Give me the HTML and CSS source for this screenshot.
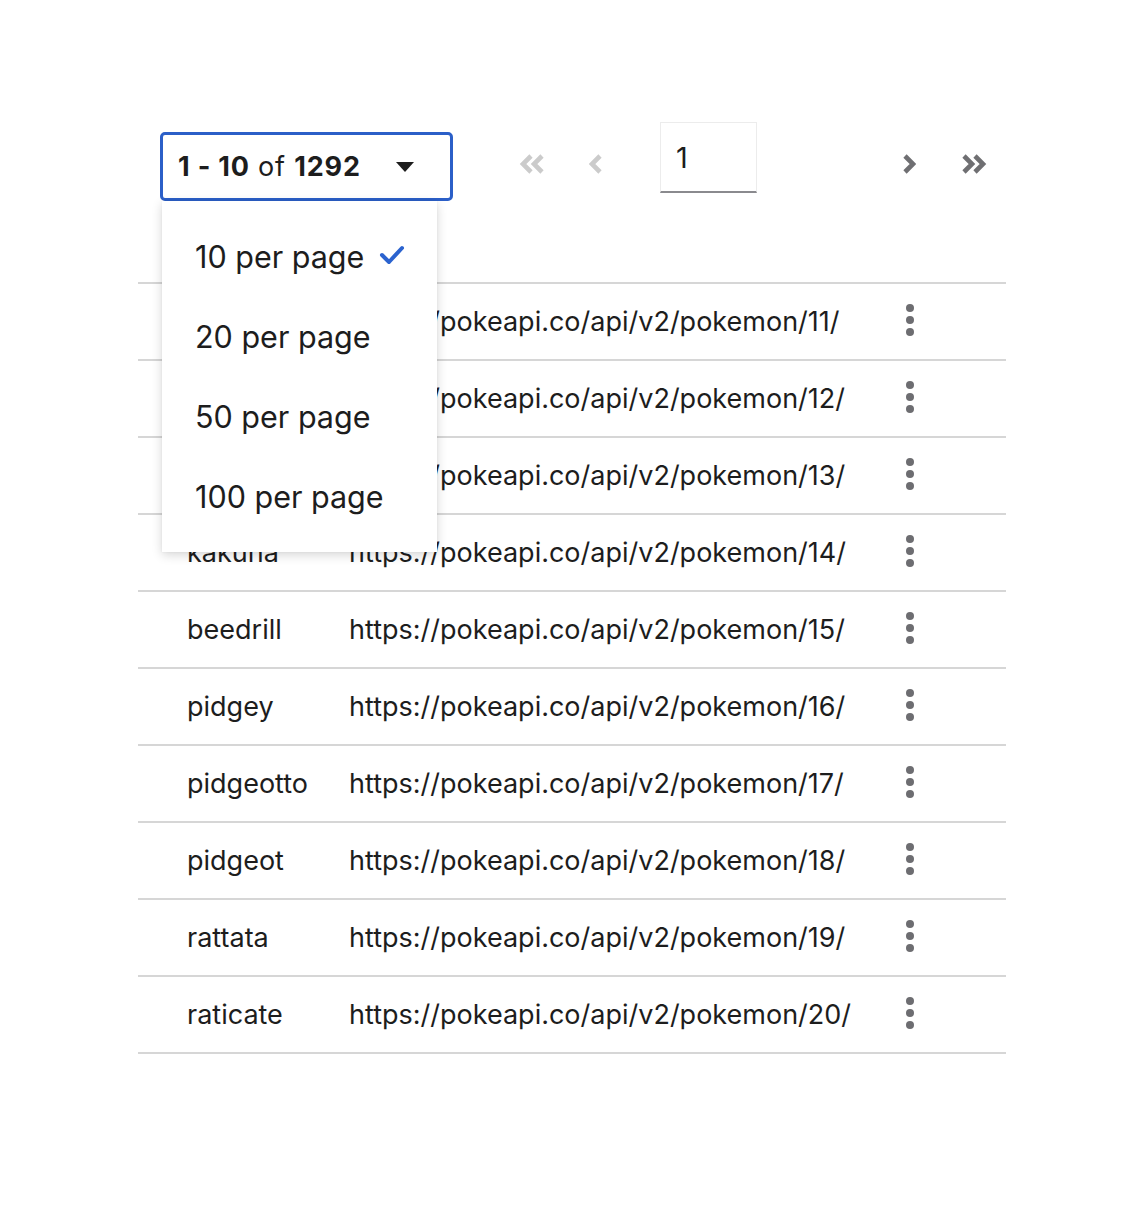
FILE: index.html
```html
<!DOCTYPE html>
<html>
<head>
<meta charset="utf-8">
<link rel="stylesheet" href="styles.css">
</head>
<body>
<div class="wrap">
  <div class="pager">
    <div class="select-wrap">
      <div class="select">
        <span class="range"><b>1 - 10</b> of <b>1292</b></span>
        <svg class="caret" width="18" height="10" viewBox="0 0 18 10"><path d="M0 0 L18 0 L9 10 Z" fill="#1d1d1d"/></svg>
      </div>
      <div class="menu">
        <div class="item">10 per page
          <svg class="check" width="26" height="22" viewBox="0 0 26 22"><path d="M3 11 L10 18 L23 4" fill="none" stroke="#2b63cf" stroke-width="4" stroke-linecap="round" stroke-linejoin="round"/></svg>
        </div>
        <div class="item">20 per page</div>
        <div class="item">50 per page</div>
        <div class="item">100 per page</div>
      </div>
    </div>
    <div class="nav">
      <span class="btn first disabled"><svg width="26" height="22" viewBox="0 0 26 22"><path d="M12 3 L4 11 L12 19 M23 3 L15 11 L23 19" fill="none" stroke="currentColor" stroke-width="4.6"/></svg></span>
      <span class="btn prev disabled"><svg width="14" height="22" viewBox="0 0 14 22"><path d="M11 3 L3 11 L11 19" fill="none" stroke="currentColor" stroke-width="4.6"/></svg></span>
      <div class="page-input">1</div>
      <span class="spacer"></span>
      <span class="btn next"><svg width="14" height="22" viewBox="0 0 14 22"><path d="M3 3 L11 11 L3 19" fill="none" stroke="currentColor" stroke-width="4.6"/></svg></span>
      <span class="btn last"><svg width="26" height="22" viewBox="0 0 26 22"><path d="M3 3 L11 11 L3 19 M14 3 L22 11 L14 19" fill="none" stroke="currentColor" stroke-width="4.6"/></svg></span>
    </div>
  </div>
  <div class="table">
    <div class="head"></div>
    <div class="row"><span class="name">metapod</span><span class="url">https://pokeapi.co/api/v2/pokemon/11/</span><span class="kebab"><i></i><i></i><i></i></span></div>
    <div class="row"><span class="name">butterfree</span><span class="url">https://pokeapi.co/api/v2/pokemon/12/</span><span class="kebab"><i></i><i></i><i></i></span></div>
    <div class="row"><span class="name">weedle</span><span class="url">https://pokeapi.co/api/v2/pokemon/13/</span><span class="kebab"><i></i><i></i><i></i></span></div>
    <div class="row"><span class="name">kakuna</span><span class="url">https://pokeapi.co/api/v2/pokemon/14/</span><span class="kebab"><i></i><i></i><i></i></span></div>
    <div class="row"><span class="name">beedrill</span><span class="url">https://pokeapi.co/api/v2/pokemon/15/</span><span class="kebab"><i></i><i></i><i></i></span></div>
    <div class="row"><span class="name">pidgey</span><span class="url">https://pokeapi.co/api/v2/pokemon/16/</span><span class="kebab"><i></i><i></i><i></i></span></div>
    <div class="row"><span class="name">pidgeotto</span><span class="url">https://pokeapi.co/api/v2/pokemon/17/</span><span class="kebab"><i></i><i></i><i></i></span></div>
    <div class="row"><span class="name">pidgeot</span><span class="url">https://pokeapi.co/api/v2/pokemon/18/</span><span class="kebab"><i></i><i></i><i></i></span></div>
    <div class="row"><span class="name">rattata</span><span class="url">https://pokeapi.co/api/v2/pokemon/19/</span><span class="kebab"><i></i><i></i><i></i></span></div>
    <div class="row"><span class="name">raticate</span><span class="url">https://pokeapi.co/api/v2/pokemon/20/</span><span class="kebab"><i></i><i></i><i></i></span></div>
  </div>
</div>
</body>
</html>
```

FILE: styles.css
```css
* { box-sizing: border-box; }
html, body { margin: 0; padding: 0; background: #fff; }
body { font-family: Inter, "Noto Sans", sans-serif; color: #1d1d1d; }

.wrap {
  margin-left: 138px;
  width: 868px;
  padding-top: 122px;
}

.pager {
  display: flex;
  align-items: flex-start;
  height: 84px;
}

.select-wrap {
  position: relative;
  margin-left: 22px;
  margin-top: 10px;
}

.select {
  width: 293px;
  height: 69px;
  border: 3px solid #2b5fc8;
  border-radius: 5px;
  display: flex;
  align-items: center;
  padding-left: 15px;
  font-size: 27px;
  letter-spacing: 0.8px;
}
.select b { font-weight: 700; }
.range { flex: 0 0 auto; }
.caret { margin-left: 35px; }

.menu {
  position: absolute;
  left: 2px;
  top: 69px;
  width: 275px;
  background: #fff;
  padding: 15px 0 16px;
  box-shadow: 0 3px 10px rgba(0,0,0,0.16), 0 0 2px rgba(0,0,0,0.06);
  z-index: 5;
}
.item {
  height: 80px;
  display: flex;
  align-items: center;
  padding-left: 33px;
  font-size: 30.5px;
}
.check { margin-left: 15px; margin-top: -2px; }

.nav {
  display: flex;
  align-items: flex-start;
  flex: 1;
  padding-left: 66px;
}
.btn {
  display: flex;
  align-items: center;
  justify-content: center;
  height: 22px;
  margin-top: 31px;
  color: #6f6f72;
}
.btn.disabled { color: #cbcbcb; }
.first { width: 26px; }
.prev { width: 14px; margin-left: 44px; }
.page-input {
  margin-left: 57px;
  width: 97px;
  height: 71px;
  border: 1px solid #ececec;
  border-bottom: 2px solid #8a8a8e;
  font-size: 29px;
  padding-left: 15px;
  padding-top: 20px;
  line-height: 1;
}
.spacer { flex: 1; }
.next { width: 14px; }
.last { width: 26px; margin-left: 45px; margin-right: 19px; }

.head { height: 78px; border-bottom: 2px solid #d6d6d6; }
.row {
  height: 77px;
  border-bottom: 2px solid #d6d6d6;
  display: flex;
  align-items: center;
  font-size: 27px;
}
.name { width: 211px; padding-left: 49px; flex: 0 0 auto; }
.url { width: 557px; flex: 0 0 auto; }
.kebab {
  display: flex;
  flex-direction: column;
  gap: 4px;
  margin-top: -4px;
}
.kebab i {
  display: block;
  width: 8px;
  height: 8px;
  border-radius: 50%;
  background: #6d6d71;
}
```
